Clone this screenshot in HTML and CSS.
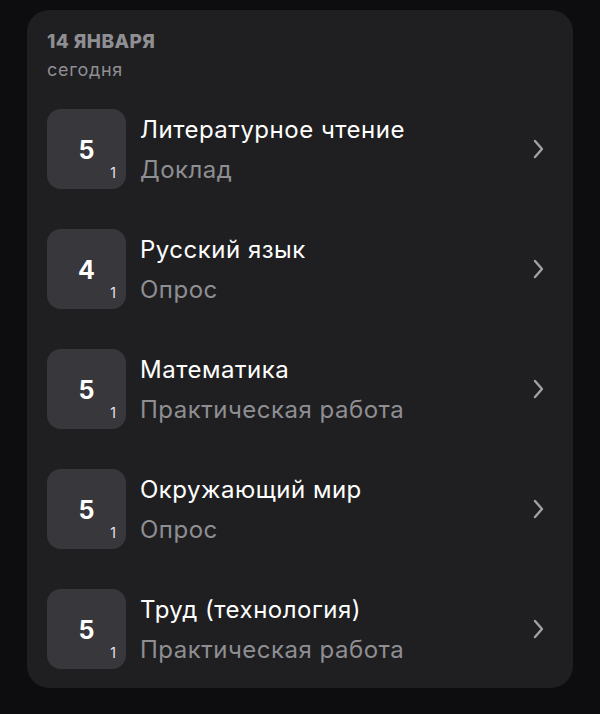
FILE: index.html
```html
<!DOCTYPE html>
<html lang="ru">
<head>
    <meta charset="UTF-8">
    <meta name="viewport" content="width=device-width, initial-scale=1.0">
    <title>Оценки</title>
    <link rel="stylesheet" href="styles.css">
</head>
<body>
    <div class="day-card">
        <div class="day-head">
            <div class="day-date">14 ЯНВАРЯ</div>
            <div class="day-sub">сегодня</div>
        </div>
        <div class="mark-row">
            <div class="mark-box"><span class="mark">5</span><span class="weight">1</span></div>
            <div class="mark-info">
                <div class="subject">Литературное чтение</div>
                <div class="work">Доклад</div>
            </div>
            <svg class="chev" width="14" height="22" viewBox="0 0 14 22"><path d="M3 3l7 8-7 8" fill="none" stroke="#a1a1a6" stroke-width="2.4" stroke-linecap="round" stroke-linejoin="round"/></svg>
        </div>
        <div class="mark-row">
            <div class="mark-box"><span class="mark">4</span><span class="weight">1</span></div>
            <div class="mark-info">
                <div class="subject">Русский язык</div>
                <div class="work">Опрос</div>
            </div>
            <svg class="chev" width="14" height="22" viewBox="0 0 14 22"><path d="M3 3l7 8-7 8" fill="none" stroke="#a1a1a6" stroke-width="2.4" stroke-linecap="round" stroke-linejoin="round"/></svg>
        </div>
        <div class="mark-row">
            <div class="mark-box"><span class="mark">5</span><span class="weight">1</span></div>
            <div class="mark-info">
                <div class="subject">Математика</div>
                <div class="work">Практическая работа</div>
            </div>
            <svg class="chev" width="14" height="22" viewBox="0 0 14 22"><path d="M3 3l7 8-7 8" fill="none" stroke="#a1a1a6" stroke-width="2.4" stroke-linecap="round" stroke-linejoin="round"/></svg>
        </div>
        <div class="mark-row">
            <div class="mark-box"><span class="mark">5</span><span class="weight">1</span></div>
            <div class="mark-info">
                <div class="subject">Окружающий мир</div>
                <div class="work">Опрос</div>
            </div>
            <svg class="chev" width="14" height="22" viewBox="0 0 14 22"><path d="M3 3l7 8-7 8" fill="none" stroke="#a1a1a6" stroke-width="2.4" stroke-linecap="round" stroke-linejoin="round"/></svg>
        </div>
        <div class="mark-row">
            <div class="mark-box"><span class="mark">5</span><span class="weight">1</span></div>
            <div class="mark-info">
                <div class="subject">Труд (технология)</div>
                <div class="work">Практическая работа</div>
            </div>
            <svg class="chev" width="14" height="22" viewBox="0 0 14 22"><path d="M3 3l7 8-7 8" fill="none" stroke="#a1a1a6" stroke-width="2.4" stroke-linecap="round" stroke-linejoin="round"/></svg>
        </div>
    </div>
</body>
</html>
```

FILE: styles.css
```css
body {
    margin: 0;
    background: #0d0d0f;
    font-family: Inter, "Noto Sans", sans-serif;
    color: #fff;
}
.day-card {
    margin: 10px 27px 0;
    padding: 20px 20px 19px;
    background: #1f1f21;
    border-radius: 22px;
    display: flex;
    flex-direction: column;
    gap: 40px;
}
.day-head {
    margin-bottom: -13px;
}
.day-date {
    font-size: 19px;
    font-weight: 800;
    letter-spacing: 0.4px;
    color: #8e8e93;
    line-height: 24px;
}
.day-sub {
    font-size: 18px;
    letter-spacing: 0.7px;
    color: #8e8e93;
    line-height: 24px;
    margin-top: 4px;
}
.mark-row {
    display: flex;
    align-items: center;
    height: 80px;
}
.mark-box {
    width: 79px;
    height: 80px;
    border-radius: 14px;
    background: #38373c;
    position: relative;
    flex-shrink: 0;
    display: flex;
    align-items: center;
    justify-content: center;
}
.mark {
    font-size: 25px;
    font-weight: 700;
    margin-top: 1px;
}
.weight {
    position: absolute;
    right: 10px;
    bottom: 8px;
    font-size: 14px;
    color: #e5e5ea;
}
.mark-info {
    flex: 1;
    padding-left: 14px;
    display: flex;
    flex-direction: column;
    gap: 10px;
    margin-top: 1px;
}
.subject {
    font-size: 24px;
    letter-spacing: 0.5px;
    line-height: 30px;
}
.work {
    font-size: 24px;
    letter-spacing: 0.5px;
    line-height: 30px;
    color: #8e8e93;
}
.chev {
    margin-right: 7px;
}
```
